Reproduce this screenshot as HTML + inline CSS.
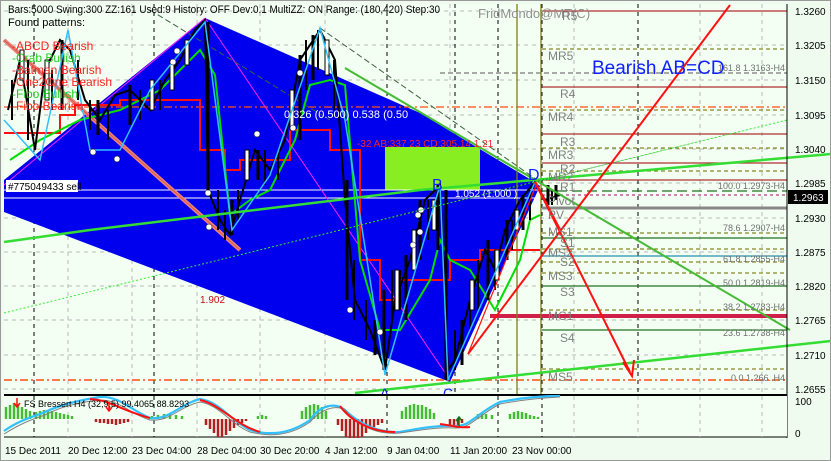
<!DOCTYPE html>
<html><head><meta charset="utf-8"><style>
html,body{margin:0;padding:0;background:#f2fff2;}
svg{display:block;font-family:"Liberation Sans",sans-serif;}
</style></head><body>
<svg width="831" height="461" viewBox="0 0 831 461" xmlns="http://www.w3.org/2000/svg">
<rect width="831" height="461" fill="#f0fbf0"/>
<rect x="4" y="4" width="783" height="390" fill="#f4fff4"/>
<g stroke="#b8b8b8" stroke-dasharray="4,4" stroke-width="1">
<path d="M4 11H787M4 45H787M4 80H787M4 115H787M4 149H787M4 183H787M4 218H787M4 252H787M4 286H787M4 320H787M4 355H787M4 389H787"/>
<path d="M68 4V394M132 4V394M197 4V394M260 4V394M325 4V394M450 4V394M574 4V394M638 4V394M700 4V394M762 4V394"/>
</g>
<g stroke="#000" stroke-dasharray="4,4" stroke-width="1">
<path d="M34 4V394M154 4V394M387 4V394M455 4V394M498 4V394M542 4V394M638 4V394"/>
</g>
<polygon points="4,180 205,18 420,113 528,178 540,186 450,382 445,380 4,212" fill="#0000ee"/>
<rect x="385" y="147" width="95" height="43" fill="#88ee22"/>
<g stroke-width="1.3">
<path d="M542 11H787M542 87H787M542 134H787M542 163H787M542 180H787" stroke="#b03030"/>
<path d="M542 49H787M542 110H787M542 148H787M542 171H787M542 233H787M542 249H787M542 273H787M542 369H787" stroke="#888820" stroke-dasharray="4,3"/>
<path d="M440 73H787" stroke="#777" stroke-dasharray="5,3"/>
<path d="M4 107H787" stroke="#ff5010" stroke-dasharray="8,3,2,3"/>
<path d="M4 380H787" stroke="#ff5010" stroke-dasharray="8,3,2,3" stroke-width="1.6"/>
<path d="M542 191H787" stroke="#207020" stroke-dasharray="10,5"/>
<path d="M542 195H787" stroke="#c03090" stroke-dasharray="3,3"/>
<path d="M542 208H787" stroke="#888" stroke-width="3"/>
<path d="M542 238H787M542 286H787M542 330H787" stroke="#207020"/>
<path d="M542 256H787" stroke="#2090b0"/>
<path d="M490 316H787" stroke="#d0204a" stroke-width="4"/>
<path d="M542 310H787M542 262H787" stroke="#888820" stroke-dasharray="4,3"/>
<path d="M517 4V394M541 4V394" stroke="#808010"/>
</g>
<path d="M4 198H540M4 190H540" stroke="#fff" stroke-width="1"/>
<path d="M4 40L240 250" stroke="#f08080" stroke-width="4"/>
<path d="M4 40L240 250" stroke="#d06040" stroke-width="1"/>
<path d="M205 18L450 380" stroke="#ff20ff" stroke-width="1"/>
<path d="M4 185L205 18" stroke="#ff20ff" stroke-width="1"/>
<path d="M320 28L540 182" stroke="#406040" stroke-width="1" stroke-dasharray="6,3"/>
<path d="M150 10L330 120" stroke="#406040" stroke-width="1" stroke-dasharray="6,3"/>
<path d="M4 133H60V115H75V105H120V100H200V150H225V170H240V160H290V130H330V150H360V260H380V300H400V280H450V260H480V250H540" stroke="#ff1010" stroke-width="2" fill="none"/>
<path d="M10 160L40 140L80 120L120 110L160 90L200 50L215 75L230 215L250 200L270 190L295 140L310 85L330 80L345 85L360 260L380 330L400 330L430 280L440 240L450 260L470 270L495 310L505 290L520 260L530 220L540 215" stroke="#00dd00" stroke-width="2" fill="none"/>
<path d="M8 110L20 60L35 150L45 70L60 40L70 50L85 100L100 120L115 95L130 90L150 110L165 80L180 60L195 30L205 20L208 190L220 220L230 235L240 200L255 150L270 170L285 140L300 60L320 30L335 60L345 200L355 300L370 330L385 370L395 300L410 260L425 200L440 185L448 370L455 360L470 300L485 250L495 270L505 230L520 200L535 182L545 200L560 195" stroke="#000" stroke-width="2" fill="none"/>
<g stroke="#000" stroke-width="3">
<path d="M62 40V110M98 100V135M130 85V125M208 22V195M232 200V235M258 150V180M300 55V140M313 35V80M347 180V300M375 320V355M384 290V370M406 255V320M420 200V260M438 185V250M446 190V380M462 320V365M488 240V300M507 220V260M523 195V230M548 185V205M556 185V200"/>
</g>
<g stroke="#000" stroke-width="2">
<path d="M12 80V120M28 60V140M52 70V110M78 60V100M90 100V130M108 110V140M140 90V120M160 80V110M218 190V230M225 210V240M238 190V220M265 150V185M278 150V180M306 40V90M318 30V70M334 60V110M354 260V320M366 300V340M392 270V320M400 270V310M428 200V240M455 330V370M470 280V330M478 260V310M495 250V290M512 220V250M530 190V220M552 190V205"/>
</g>
<g stroke="#000" stroke-width="1" fill="#fff">
<rect x="20" y="50" width="4" height="30"/><rect x="45" y="60" width="4" height="40"/><rect x="150" y="80" width="4" height="30"/><rect x="170" y="60" width="4" height="30"/><rect x="185" y="40" width="4" height="25"/><rect x="245" y="150" width="4" height="30"/><rect x="290" y="90" width="4" height="40"/><rect x="325" y="40" width="4" height="35"/><rect x="395" y="270" width="4" height="40"/><rect x="412" y="230" width="4" height="40"/><rect x="432" y="200" width="4" height="30"/><rect x="470" y="280" width="4" height="30"/><rect x="495" y="250" width="4" height="30"/><rect x="515" y="210" width="4" height="20"/>
</g>
<path d="M4 120L40 160L68 30L90 150L120 150L150 90L205 22L232 230L270 175L320 28L345 120L385 375L440 185L448 380L535 182" stroke="#30c0ff" stroke-width="1.5" fill="none"/>
<g fill="#fff" stroke="#000" stroke-width="0.5">
<circle cx="93" cy="152" r="3"/><circle cx="117" cy="159" r="3"/><circle cx="177" cy="51" r="3"/><circle cx="173" cy="62" r="3"/><circle cx="208" cy="193" r="3"/><circle cx="209" cy="227" r="3"/><circle cx="257" cy="134" r="3"/><circle cx="293" cy="128" r="3"/><circle cx="300" cy="73" r="3"/><circle cx="350" cy="310" r="3"/><circle cx="380" cy="332" r="3"/><circle cx="420" cy="232" r="3"/><circle cx="421" cy="210" r="3"/><circle cx="413" cy="245" r="3"/><circle cx="418" cy="215" r="3"/>
</g>
<path d="M4 242L90 230L420 190L831 154" stroke="#33dd33" stroke-width="2.5" fill="none"/>
<path d="M355 393L831 341" stroke="#33dd33" stroke-width="2.5"/>
<path d="M345 68L790 330" stroke="#44bb33" stroke-width="2"/>
<path d="M4 313L300 240L542 180L787 120" stroke="#33ee33" stroke-width="1" stroke-dasharray="2,2"/>
<path d="M468 354L730 5" stroke="#ff1010" stroke-width="2"/>
<path d="M468 354L537 183" stroke="#ff1010" stroke-width="1.2"/>
<path d="M535 182L630 372" stroke="#ff1010" stroke-width="2"/>
<path d="M623 362L632 376L634 360" stroke="#ff1010" stroke-width="2" fill="none"/>
<path d="M535 182L560 230" stroke="#ff1010" stroke-width="2.5"/>
<g font-size="11" fill="#000">
<text x="8" y="13" textLength="432" lengthAdjust="spacingAndGlyphs">Bars:5000  Swing:300  ZZ:161  Used:9  History: OFF Dev:0.1  MultiZZ: ON  Range: (180,420)  Step:30</text>
<text x="8" y="26">Found patterns:</text>
</g>
<g font-size="12">
<text x="12" y="50" fill="#ff2020">-ABCD Bearish</text>
<text x="12" y="62" fill="#20cc20">-Crab Bullish</text>
<text x="12" y="74" fill="#ff2020">-Batman Bearish</text>
<text x="12" y="86" fill="#ff2020">-One2One Bearish</text>
<text x="12" y="98" fill="#20cc20">-Fibo Bullish</text>
<text x="12" y="110" fill="#ff2020">-Fibo Bearish</text>
</g>
<rect x="6" y="180" width="72" height="12" fill="#fff"/>
<text x="8" y="190" font-size="10" fill="#000">#775049433 sell</text>
<text x="478" y="18" font-size="13" fill="#909090">FridMondo@MT(C)</text>
<text x="592" y="74" font-size="19" fill="#1020ff">Bearish AB=CD</text>
<text x="284" y="118" font-size="11" fill="#fff">0.326 (0.500) 0.538 (0.50</text>
<text x="357" y="147" font-size="10" fill="#ff2020">-32   AB:337   23 CD:305.14   1.21</text>
<text x="455" y="197" font-size="10" fill="#fff">1.052 (1.000 )</text>
<text x="200" y="303" font-size="10" fill="#c01010">1.902</text>
<text x="432" y="190" font-size="16" fill="#1020ff">B</text>
<text x="528" y="180" font-size="16" fill="#1020ff">D</text>
<text x="380" y="398" font-size="14" fill="#1020ff">A</text>
<text x="443" y="398" font-size="14" fill="#1020ff">C</text>
<g font-size="12" fill="#808080">
<text x="562" y="20">R5</text><text x="548" y="60">MR5</text><text x="560" y="98">R4</text><text x="548" y="121">MR4</text><text x="560" y="146">R3</text><text x="548" y="159">MR3</text><text x="560" y="173">R2</text><text x="548" y="181">MR2</text><text x="560" y="191">R1</text><text x="548" y="205">Pivot</text><text x="548" y="219">PV</text><text x="548" y="236">MS1</text><text x="560" y="247">S1</text><text x="548" y="257">MS2</text><text x="560" y="266">S2</text><text x="548" y="280">MS3</text><text x="560" y="296">S3</text><text x="548" y="320">MC1</text><text x="560" y="342">S4</text><text x="548" y="381">MS5</text>
</g>
<g font-size="9" fill="#707070" text-anchor="end">
<text x="785" y="71">161.8 1.3163-H4</text><text x="785" y="189">100.0 1.2973-H4</text><text x="785" y="231">78.6 1.2907-H4</text><text x="785" y="262">61.8 1.2855-H4</text><text x="785" y="286">50.0 1.2819-H4</text><text x="785" y="310">38.2 1.2783-H4</text><text x="785" y="336">23.6 1.2738-H4</text><text x="785" y="381">0.0 1.266..H4</text>
</g>
<path d="M787 4V438" stroke="#000"/>
<g font-size="10" fill="#000">
<text x="795" y="15">1.3260</text><text x="795" y="49">1.3205</text><text x="795" y="84">1.3150</text><text x="795" y="119">1.3095</text><text x="795" y="153">1.3040</text><text x="795" y="187">1.2985</text><text x="795" y="222">1.2930</text><text x="795" y="256">1.2875</text><text x="795" y="290">1.2820</text><text x="795" y="324">1.2765</text><text x="795" y="359">1.2710</text><text x="795" y="393">1.2655</text>
<text x="795" y="405">100</text><text x="795" y="437">0</text>
</g>
<rect x="788" y="190" width="40" height="14" fill="#000"/>
<text x="793" y="201" font-size="10" fill="#fff">1.2963</text>
<rect x="4" y="394" width="783" height="2" fill="#000"/>
<rect x="4" y="396" width="783" height="41" fill="#f4fff4"/>
<path d="M4 437H787" stroke="#000"/>
<g stroke="#b8b8b8" stroke-dasharray="4,4"><path d="M68 396V437M132 396V437M197 396V437M260 396V437M325 396V437M574 396V437M638 396V437M700 396V437M762 396V437"/></g>
<g stroke="#000" stroke-dasharray="4,4"><path d="M34 396V437M154 396V437M387 396V437M498 396V437M542 396V437"/></g>
<path stroke="#44bb33" stroke-width="2.5" d="M6 419v-12M10 419v-14M14 419v-16M18 419v-14M22 419v-12M26 419v-10M30 419v-8M36 419v-7M40 419v-8M44 419v-9M48 419v-8M52 419v-8M56 419v-7M60 419v-6M64 419v-5M68 419v-4M72 419v-3M152 419v-3M158 419v-4M164 419v-5M170 419v-5M176 419v-4M182 419v-3M258 419v-3M262 419v-4M266 419v-3M302 419v-8M306 419v-12M310 419v-14M314 419v-15M318 419v-14M322 419v-12M326 419v-8M402 419v-8M406 419v-12M410 419v-14M414 419v-15M418 419v-14M422 419v-14M426 419v-12M430 419v-10M434 419v-6M478 419v-5M482 419v-6M486 419v-5M492 419v-4M510 419v-5M514 419v-7M518 419v-8M522 419v-7M526 419v-6M530 419v-4M534 419v-3M538 419v-2"/>
<path stroke="#b02020" stroke-width="2.5" d="M96 419v3M100 419v4M104 419v4M108 419v5M112 419v5M116 419v6M120 419v5M124 419v4M128 419v3M206 419v6M210 419v10M214 419v14M218 419v18M222 419v18M226 419v16M230 419v12M234 419v9M238 419v6M242 419v4M246 419v2M338 419v6M342 419v12M346 419v18M350 419v22M354 419v24M358 419v22M362 419v18M366 419v14M370 419v10M374 419v8M378 419v6M382 419v4M450 419v6M454 419v8M458 419v6M462 419v4"/>
<path d="M4 431C20 420 30 418 45 412C60 405 80 400 100 397C120 396 130 410 150 418C170 420 180 404 200 399C220 402 230 420 250 430C270 436 290 434 310 420C320 405 335 402 345 410C360 425 380 433 400 432C420 428 440 425 455 426C470 427 478 412 500 402C520 398 540 396 560 396" stroke="#30c0ff" stroke-width="2.2" fill="none"/>
<path d="M4 434C20 424 30 420 45 415C60 407 80 402 100 400C120 400 130 414 150 420C170 422 180 406 200 402C220 405 230 424 250 432C270 437 290 436 310 422C320 410 335 404 345 410C360 428 380 435 400 433C420 430 440 427 455 428C470 429 478 415 500 404C520 400 540 398 560 397" stroke="#808080" stroke-width="1" fill="none"/>
<path d="M90 399C110 400 120 410 150 418M200 400C220 404 235 425 260 432M340 406C350 420 370 432 395 432M440 424C455 426 460 428 470 427" stroke="#ff1010" stroke-width="2" fill="none"/>
<text x="24" y="407" font-size="9" fill="#000">FS Bressert H4 (32,9,5) 99.4065 88.8293</text>
<path d="M17 398v8M14 403l3 4l3-4M109 402v8M106 407l3 4l3-4" stroke="#ff1010" stroke-width="1.5" fill="none"/>
<path d="M459 426v-8M456 421l3-4l3 4" stroke="#107010" stroke-width="1.5" fill="none"/>
<rect x="0" y="438" width="831" height="23" fill="#f0fbf0"/>
<g font-size="10" fill="#000">
<text x="5" y="454">15 Dec 2011</text><text x="68" y="454">20 Dec 12:00</text><text x="132" y="454">23 Dec 04:00</text><text x="197" y="454">28 Dec 04:00</text><text x="260" y="454">30 Dec 20:00</text><text x="325" y="454">4 Jan 12:00</text><text x="387" y="454">9 Jan 04:00</text><text x="450" y="454">11 Jan 20:00</text><text x="512" y="454">23 Nov 00:00</text>
</g>
<rect x="0.5" y="0.5" width="830" height="460" fill="none" stroke="#999"/>
</svg>
</body></html>
